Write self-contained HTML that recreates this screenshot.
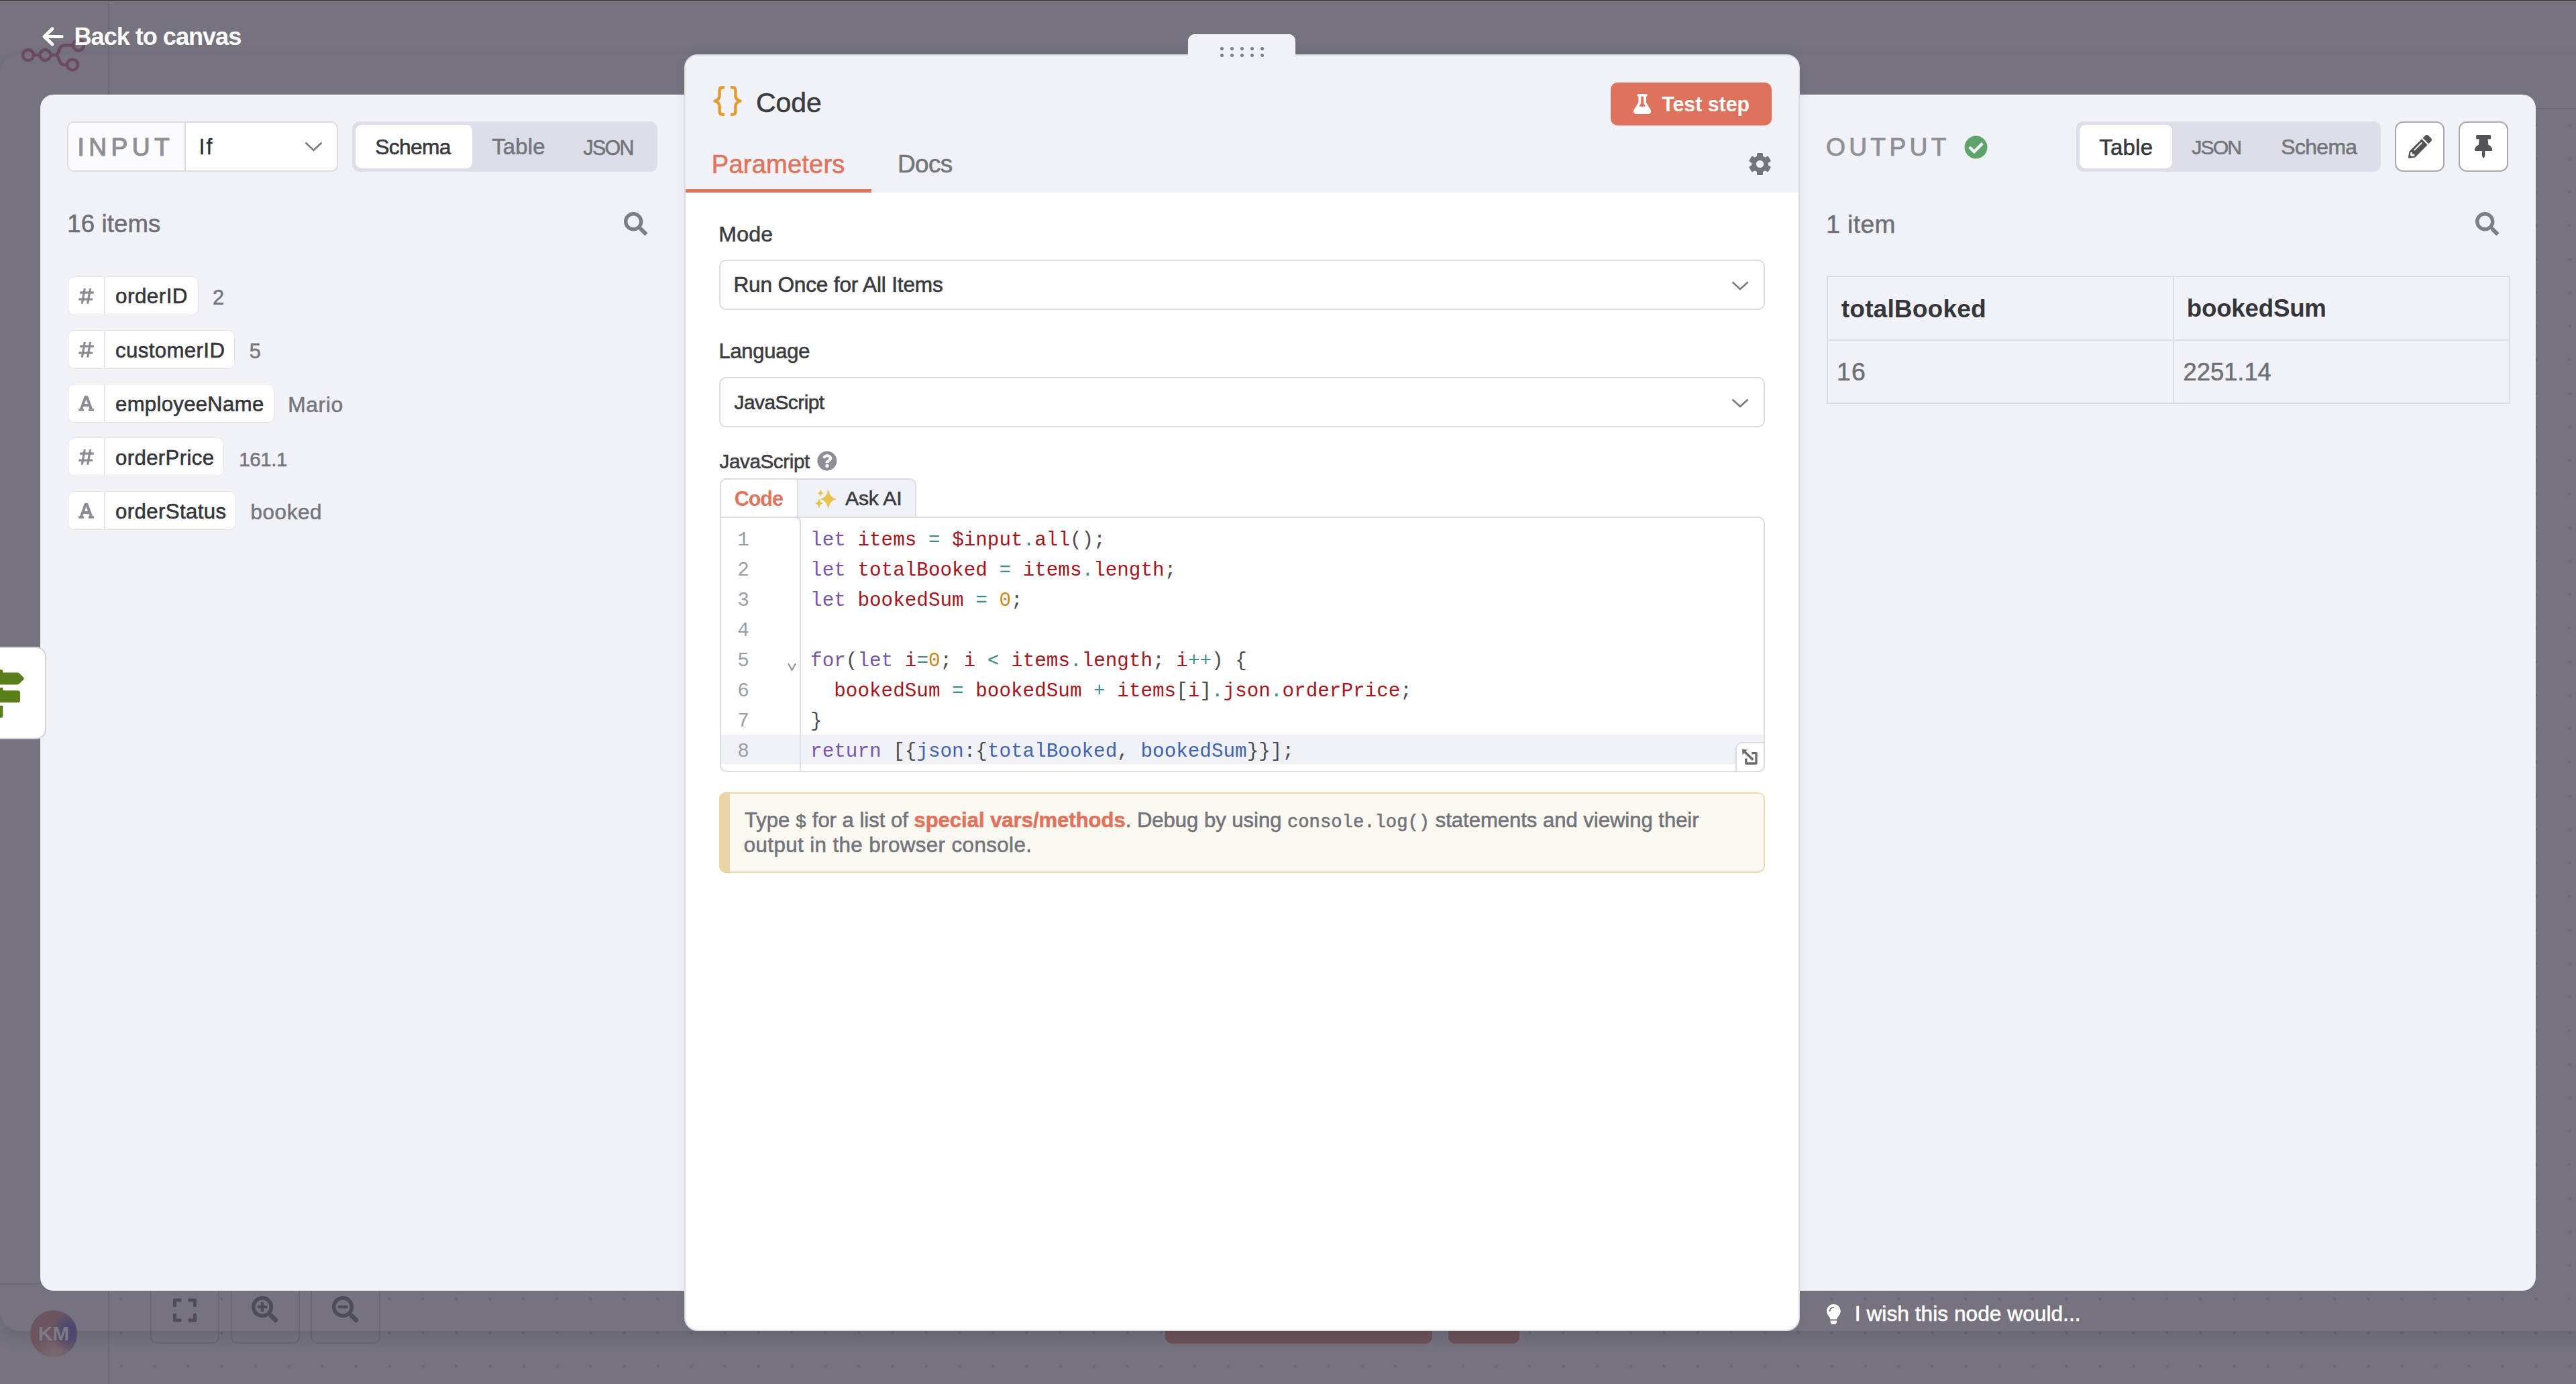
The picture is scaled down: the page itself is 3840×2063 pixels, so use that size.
<!DOCTYPE html><html><head><meta charset="utf-8"><style>html,body{margin:0;padding:0;width:3840px;height:2063px;overflow:hidden;background:#76737f}body{position:relative;font-family:"Liberation Sans",sans-serif}</style></head><body><div style="position:absolute;left:0;top:0;width:3840px;height:2063px;background:#76737f"></div>
<div style="position:absolute;left:162px;top:162px;width:3678px;height:1901px;background-image:radial-gradient(circle at 25px 25px, #6a6773 0, #6a6773 2px, rgba(0,0,0,0) 2.6px);background-size:50px 50px;background-position:43.5px 49.5px"></div>
<div style="position:absolute;left:161px;top:0px;width:2px;height:2063px;box-sizing:border-box;background:#6c6975"></div>
<div style="position:absolute;left:162px;top:161px;width:3678px;height:2px;box-sizing:border-box;background:#6e6b77"></div>
<div style="position:absolute;left:0px;top:0px;width:3840px;height:1px;box-sizing:border-box;background:#353432"></div>
<div style="position:absolute;left:0px;top:1px;width:3840px;height:1px;box-sizing:border-box;background:#7b7886"></div>
<svg style="position:absolute;left:20px;top:50px;overflow:visible" width="110" height="60" viewBox="0 0 110 60"><g fill="none" stroke="#6b4a62" stroke-width="4.5">
<circle cx="22" cy="32" r="8"/><circle cx="47.5" cy="32" r="8"/><circle cx="97" cy="17.5" r="8"/><circle cx="88" cy="46.5" r="8"/>
<path d="M30 32 H39.5 M55.5 32 H62 C70 32 66 17.5 76 17.5 H89 M62 32 C70 32 66 46.5 76 46.5 H80"/></g></svg>
<div style="position:absolute;left:224px;top:1890px;width:103px;height:113px;box-sizing:border-box;background:#76737f;border:2px solid #6a6772;border-radius:10px"></div>
<div style="position:absolute;left:344px;top:1890px;width:103px;height:113px;box-sizing:border-box;background:#76737f;border:2px solid #6a6772;border-radius:10px"></div>
<div style="position:absolute;left:463px;top:1890px;width:104px;height:113px;box-sizing:border-box;background:#76737f;border:2px solid #6a6772;border-radius:10px"></div>
<svg style="position:absolute;left:257.6px;top:1932.5px;overflow:visible" width="35" height="40" viewBox="0 0 448 512"><path fill="#4e4c56" d="M0 180V56c0-13.3 10.7-24 24-24h124c6.6 0 12 5.4 12 12v40c0 6.6-5.4 12-12 12H64v84c0 6.6-5.4 12-12 12H12c-6.6 0-12-5.4-12-12zM288 44v40c0 6.6 5.4 12 12 12h84v84c0 6.6 5.4 12 12 12h40c6.6 0 12-5.4 12-12V56c0-13.3-10.7-24-24-24H300c-6.6 0-12 5.4-12 12zm148 276h-40c-6.6 0-12 5.4-12 12v84h-84c-6.6 0-12 5.4-12 12v40c0 6.6 5.4 12 12 12h124c13.3 0 24-10.7 24-24V332c0-6.6-5.4-12-12-12zM160 468v-40c0-6.6-5.4-12-12-12H64v-84c0-6.6-5.4-12-12-12H12c-6.6 0-12 5.4-12 12v124c0 13.3 10.7 24 24 24h124c6.6 0 12-5.4 12-12z"/></svg>
<svg style="position:absolute;left:375px;top:1931.8px;overflow:visible" width="39.6" height="39.6" viewBox="0 0 512 512"><path fill="#4e4c56" d="M304 192v32c0 6.6-5.4 12-12 12h-56v56c0 6.6-5.4 12-12 12h-32c-6.6 0-12-5.4-12-12v-56h-56c-6.6 0-12-5.4-12-12v-32c0-6.6 5.4-12 12-12h56v-56c0-6.6 5.4-12 12-12h32c6.6 0 12 5.4 12 12v56h56c6.6 0 12 5.4 12 12zm201 284.7L476.7 505c-9.4 9.4-24.6 9.4-33.9 0L343 405.3c-4.5-4.5-7-10.6-7-17V372c-35.3 27.6-79.7 44-128 44C93.1 416 0 322.9 0 208S93.1 0 208 0s208 93.1 208 208c0 48.3-16.4 92.7-44 128h16.3c6.4 0 12.5 2.5 17 7l99.7 99.7c9.3 9.4 9.3 24.6 0 34zM344 208c0-75.2-60.8-136-136-136S72 132.8 72 208s60.8 136 136 136 136-60.8 136-136z"/></svg>
<svg style="position:absolute;left:495px;top:1931.8px;overflow:visible" width="39.6" height="39.6" viewBox="0 0 512 512"><path fill="#4e4c56" d="M304 192v32c0 6.6-5.4 12-12 12H124c-6.6 0-12-5.4-12-12v-32c0-6.6 5.4-12 12-12h168c6.6 0 12 5.4 12 12zm201 284.7L476.7 505c-9.4 9.4-24.6 9.4-33.9 0L343 405.3c-4.5-4.5-7-10.6-7-17V372c-35.3 27.6-79.7 44-128 44C93.1 416 0 322.9 0 208S93.1 0 208 0s208 93.1 208 208c0 48.3-16.4 92.7-44 128h16.3c6.4 0 12.5 2.5 17 7l99.7 99.7c9.3 9.4 9.3 24.6 0 34zM344 208c0-75.2-60.8-136-136-136S72 132.8 72 208s60.8 136 136 136 136-60.8 136-136z"/></svg>
<div style="position:absolute;left:1737px;top:1960px;width:398px;height:43px;box-sizing:border-box;background:#6f5258;border-radius:10px"></div>
<div style="position:absolute;left:2159px;top:1960px;width:106px;height:43px;box-sizing:border-box;background:#6f5258;border-radius:10px"></div>
<svg style="position:absolute;left:62px;top:40px;overflow:visible" width="31" height="29" viewBox="0 0 31 29"><path d="M16 3 L4 14.5 L16 26 M4.5 14.5 H30" fill="none" stroke="#fff" stroke-width="5" stroke-linecap="round" stroke-linejoin="round"/></svg>
<div style="position:absolute;left:110.56px;top:37.37px;font-family:'Liberation Sans', sans-serif;font-size:36.19px;line-height:36.19px;letter-spacing:-1.05px;color:#fff;font-weight:bold;white-space:pre;">Back to canvas</div>
<div style="position:absolute;left:0px;top:81px;width:3880px;height:1903px;border-radius:30px;box-shadow:0 10px 24px rgba(40,38,50,0.16)"></div>
<div style="position:absolute;left:0px;top:1913px;width:60px;height:2px;box-sizing:border-box;background:#6d6a76"></div>
<div style="position:absolute;left:45px;top:1953px;width:70px;height:70px;border-radius:50%;background:radial-gradient(circle at 85% 45%, #4d4870 0, rgba(77,72,112,0.9) 12px, rgba(77,72,112,0) 30px), radial-gradient(circle at 50% 100%, #7a6c74 0, rgba(122,108,116,0) 35px), #6c5560"></div>
<div style="position:absolute;left:56.73px;top:1973.41px;font-family:'Liberation Sans', sans-serif;font-size:29.94px;line-height:29.94px;letter-spacing:-0.09px;color:#7f7b87;font-weight:bold;white-space:pre;">KM</div>
<div style="position:absolute;left:60px;top:141px;width:1040px;height:1783px;box-sizing:border-box;background:#f1f2f7;border-radius:20px"></div>
<div style="position:absolute;left:100px;top:181px;width:404px;height:75px;box-sizing:border-box;background:#fff;border:2px solid #d9dbe5;border-radius:10px"></div>
<div style="position:absolute;left:102px;top:183px;width:174px;height:71px;box-sizing:border-box;background:#fbfbfd;border-radius:8px 0 0 8px"></div>
<div style="position:absolute;left:275px;top:183px;width:2px;height:71px;box-sizing:border-box;background:#d9dbe5"></div>
<div style="position:absolute;left:115.56px;top:200.81px;font-family:'Liberation Sans', sans-serif;font-size:37.20px;line-height:37.20px;letter-spacing:6.42px;color:#8f9096;font-weight:normal;white-space:pre;-webkit-text-stroke-width:1.2px;">INPUT</div>
<div style="position:absolute;left:296.41px;top:202.74px;font-family:'Liberation Sans', sans-serif;font-size:32.32px;line-height:32.32px;letter-spacing:2.17px;color:#2e2f34;font-weight:normal;white-space:pre;-webkit-text-stroke-width:0.3px;">If</div>
<svg style="position:absolute;left:454px;top:211px;overflow:visible" width="27" height="15" viewBox="0 0 27 15"><path d="M1.5 1.5 L13.5 13 L25.5 1.5" fill="none" stroke="#7a7b81" stroke-width="2.6"/></svg>
<div style="position:absolute;left:525px;top:181px;width:455px;height:75px;box-sizing:border-box;background:#dcdee8;border-radius:11px"></div>
<div style="position:absolute;left:530px;top:186px;width:174px;height:65px;box-sizing:border-box;background:#fff;border-radius:9px"></div>
<div style="position:absolute;left:559.17px;top:203.76px;font-family:'Liberation Sans', sans-serif;font-size:31.71px;line-height:31.71px;letter-spacing:-0.63px;color:#38393e;font-weight:normal;white-space:pre;-webkit-text-stroke-width:0.6px;">Schema</div>
<div style="position:absolute;left:733.26px;top:202.79px;font-family:'Liberation Sans', sans-serif;font-size:32.86px;line-height:32.86px;letter-spacing:0.15px;color:#74757b;font-weight:normal;white-space:pre;-webkit-text-stroke-width:0.6px;">Table</div>
<div style="position:absolute;left:869.54px;top:204.84px;font-family:'Liberation Sans', sans-serif;font-size:30.43px;line-height:30.43px;letter-spacing:-1.74px;color:#74757b;font-weight:normal;white-space:pre;-webkit-text-stroke-width:0.6px;">JSON</div>
<div style="position:absolute;left:100.26px;top:316.07px;font-family:'Liberation Sans', sans-serif;font-size:36.54px;line-height:36.54px;letter-spacing:0.13px;color:#6f7077;font-weight:normal;white-space:pre;-webkit-text-stroke-width:0.6px;">16 items</div>
<svg style="position:absolute;left:930px;top:316px;overflow:visible" width="35" height="35" viewBox="0 0 512 512"><path fill="#7e7f86" d="M505 442.7L405.3 343c-4.5-4.5-10.6-7-17-7H372c27.6-35.3 44-79.7 44-128C416 93.1 322.9 0 208 0S0 93.1 0 208s93.1 208 208 208c48.3 0 92.7-16.4 128-44v16.3c0 6.4 2.5 12.5 7 17l99.7 99.7c9.4 9.4 24.6 9.4 33.9 0l28.3-28.3c9.4-9.4 9.4-24.6.1-34zM208 336c-70.7 0-128-57.2-128-128 0-70.7 57.2-128 128-128 70.7 0 128 57.2 128 128 0 70.7-57.2 128-128 128z"/></svg>
<div style="position:absolute;left:101px;top:412px;width:195px;height:58px;box-sizing:border-box;background:#fff;border:1.5px solid #e4e5ec;border-radius:10px"></div>
<div style="position:absolute;left:154.5px;top:413px;width:2.0px;height:56px;box-sizing:border-box;background:#e4e5ec"></div>
<svg style="position:absolute;left:117px;top:428.4px;overflow:visible" width="23" height="26.3" viewBox="0 0 448 512"><path fill="#8d8e95" d="M440.667 182.109l7.143-40c1.313-7.355-4.342-14.109-11.813-14.109h-74.81l14.623-81.891C377.123 38.754 371.468 32 363.997 32h-40.632a12 12 0 0 0-11.813 9.891L296.175 128H197.54l14.623-81.891C213.477 38.754 207.822 32 200.35 32h-40.632a12 12 0 0 0-11.813 9.891L132.528 128H53.432a12 12 0 0 0-11.813 9.891l-7.143 40C33.163 185.246 38.818 192 46.289 192h74.81L98.242 320H19.146a12 12 0 0 0-11.813 9.891l-7.143 40C-1.123 377.246 4.532 384 12.003 384h74.81L72.19 465.891C70.877 473.246 76.532 480 84.003 480h40.632a12 12 0 0 0 11.813-9.891L151.826 384h98.634l-14.623 81.891C234.523 473.246 240.178 480 247.65 480h40.632a12 12 0 0 0 11.813-9.891L315.472 384h79.096a12 12 0 0 0 11.813-9.891l7.143-40c1.313-7.355-4.342-14.109-11.813-14.109h-74.81l22.857-128h79.096a12 12 0 0 0 11.813-9.891zM261.889 320h-98.634l22.857-128h98.634l-22.857 128z"/></svg>
<div style="position:absolute;left:172.07px;top:426.46px;font-family:'Liberation Sans', sans-serif;font-size:31.36px;line-height:31.36px;letter-spacing:0.48px;color:#35363b;font-weight:normal;white-space:pre;-webkit-text-stroke-width:0.6px;">orderID</div>
<div style="position:absolute;left:317.06px;top:428.98px;font-family:'Liberation Sans', sans-serif;font-size:30.74px;line-height:30.74px;letter-spacing:0.00px;color:#76777e;font-weight:normal;white-space:pre;-webkit-text-stroke-width:0.6px;">2</div>
<div style="position:absolute;left:101px;top:492px;width:249.39999999999998px;height:58px;box-sizing:border-box;background:#fff;border:1.5px solid #e4e5ec;border-radius:10px"></div>
<div style="position:absolute;left:154.5px;top:493px;width:2.0px;height:56px;box-sizing:border-box;background:#e4e5ec"></div>
<svg style="position:absolute;left:117px;top:508.4px;overflow:visible" width="23" height="26.3" viewBox="0 0 448 512"><path fill="#8d8e95" d="M440.667 182.109l7.143-40c1.313-7.355-4.342-14.109-11.813-14.109h-74.81l14.623-81.891C377.123 38.754 371.468 32 363.997 32h-40.632a12 12 0 0 0-11.813 9.891L296.175 128H197.54l14.623-81.891C213.477 38.754 207.822 32 200.35 32h-40.632a12 12 0 0 0-11.813 9.891L132.528 128H53.432a12 12 0 0 0-11.813 9.891l-7.143 40C33.163 185.246 38.818 192 46.289 192h74.81L98.242 320H19.146a12 12 0 0 0-11.813 9.891l-7.143 40C-1.123 377.246 4.532 384 12.003 384h74.81L72.19 465.891C70.877 473.246 76.532 480 84.003 480h40.632a12 12 0 0 0 11.813-9.891L151.826 384h98.634l-14.623 81.891C234.523 473.246 240.178 480 247.65 480h40.632a12 12 0 0 0 11.813-9.891L315.472 384h79.096a12 12 0 0 0 11.813-9.891l7.143-40c1.313-7.355-4.342-14.109-11.813-14.109h-74.81l22.857-128h79.096a12 12 0 0 0 11.813-9.891zM261.889 320h-98.634l22.857-128h98.634l-22.857 128z"/></svg>
<div style="position:absolute;left:172.07px;top:506.61px;font-family:'Liberation Sans', sans-serif;font-size:31.18px;line-height:31.18px;letter-spacing:0.39px;color:#35363b;font-weight:normal;white-space:pre;-webkit-text-stroke-width:0.6px;">customerID</div>
<div style="position:absolute;left:371.77px;top:508.90px;font-family:'Liberation Sans', sans-serif;font-size:30.83px;line-height:30.83px;letter-spacing:0.00px;color:#76777e;font-weight:normal;white-space:pre;-webkit-text-stroke-width:0.6px;">5</div>
<div style="position:absolute;left:101px;top:572px;width:307.5px;height:58px;box-sizing:border-box;background:#fff;border:1.5px solid #e4e5ec;border-radius:10px"></div>
<div style="position:absolute;left:154.5px;top:573px;width:2.0px;height:56px;box-sizing:border-box;background:#e4e5ec"></div>
<svg style="position:absolute;left:117px;top:588.4px;overflow:visible" width="23" height="26.3" viewBox="0 0 448 512"><path fill="#8d8e95" d="M432 416h-23.41L277.88 53.69A32 32 0 0 0 247.58 32h-47.16a32 32 0 0 0-30.3 21.69L39.41 416H16a16 16 0 0 0-16 16v32a16 16 0 0 0 16 16h128a16 16 0 0 0 16-16v-32a16 16 0 0 0-16-16h-19.58l23.3-64h152.56l23.3 64H304a16 16 0 0 0-16 16v32a16 16 0 0 0 16 16h128a16 16 0 0 0 16-16v-32a16 16 0 0 0-16-16zM176.85 272L224 142.51 271.150 272z"/></svg>
<div style="position:absolute;left:172.08px;top:586.73px;font-family:'Liberation Sans', sans-serif;font-size:31.04px;line-height:31.04px;letter-spacing:0.34px;color:#35363b;font-weight:normal;white-space:pre;-webkit-text-stroke-width:0.6px;">employeeName</div>
<div style="position:absolute;left:429.19px;top:588.19px;font-family:'Liberation Sans', sans-serif;font-size:31.67px;line-height:31.67px;letter-spacing:0.72px;color:#76777e;font-weight:normal;white-space:pre;-webkit-text-stroke-width:0.6px;">Mario</div>
<div style="position:absolute;left:101px;top:652px;width:233px;height:58px;box-sizing:border-box;background:#fff;border:1.5px solid #e4e5ec;border-radius:10px"></div>
<div style="position:absolute;left:154.5px;top:653px;width:2.0px;height:56px;box-sizing:border-box;background:#e4e5ec"></div>
<svg style="position:absolute;left:117px;top:668.4px;overflow:visible" width="23" height="26.3" viewBox="0 0 448 512"><path fill="#8d8e95" d="M440.667 182.109l7.143-40c1.313-7.355-4.342-14.109-11.813-14.109h-74.81l14.623-81.891C377.123 38.754 371.468 32 363.997 32h-40.632a12 12 0 0 0-11.813 9.891L296.175 128H197.54l14.623-81.891C213.477 38.754 207.822 32 200.35 32h-40.632a12 12 0 0 0-11.813 9.891L132.528 128H53.432a12 12 0 0 0-11.813 9.891l-7.143 40C33.163 185.246 38.818 192 46.289 192h74.81L98.242 320H19.146a12 12 0 0 0-11.813 9.891l-7.143 40C-1.123 377.246 4.532 384 12.003 384h74.81L72.19 465.891C70.877 473.246 76.532 480 84.003 480h40.632a12 12 0 0 0 11.813-9.891L151.826 384h98.634l-14.623 81.891C234.523 473.246 240.178 480 247.65 480h40.632a12 12 0 0 0 11.813-9.891L315.472 384h79.096a12 12 0 0 0 11.813-9.891l7.143-40c1.313-7.355-4.342-14.109-11.813-14.109h-74.81l22.857-128h79.096a12 12 0 0 0 11.813-9.891zM261.889 320h-98.634l22.857-128h98.634l-22.857 128z"/></svg>
<div style="position:absolute;left:172.07px;top:666.61px;font-family:'Liberation Sans', sans-serif;font-size:31.18px;line-height:31.18px;letter-spacing:0.35px;color:#35363b;font-weight:normal;white-space:pre;-webkit-text-stroke-width:0.6px;">orderPrice</div>
<div style="position:absolute;left:356.18px;top:669.90px;font-family:'Liberation Sans', sans-serif;font-size:29.65px;line-height:29.65px;letter-spacing:-0.49px;color:#76777e;font-weight:normal;white-space:pre;-webkit-text-stroke-width:0.6px;">161.1</div>
<div style="position:absolute;left:101px;top:732px;width:251px;height:58px;box-sizing:border-box;background:#fff;border:1.5px solid #e4e5ec;border-radius:10px"></div>
<div style="position:absolute;left:154.5px;top:733px;width:2.0px;height:56px;box-sizing:border-box;background:#e4e5ec"></div>
<svg style="position:absolute;left:117px;top:748.4px;overflow:visible" width="23" height="26.3" viewBox="0 0 448 512"><path fill="#8d8e95" d="M432 416h-23.41L277.88 53.69A32 32 0 0 0 247.58 32h-47.16a32 32 0 0 0-30.3 21.69L39.41 416H16a16 16 0 0 0-16 16v32a16 16 0 0 0 16 16h128a16 16 0 0 0 16-16v-32a16 16 0 0 0-16-16h-19.58l23.3-64h152.56l23.3 64H304a16 16 0 0 0-16 16v32a16 16 0 0 0 16 16h128a16 16 0 0 0 16-16v-32a16 16 0 0 0-16-16zM176.85 272L224 142.51 271.150 272z"/></svg>
<div style="position:absolute;left:172.07px;top:746.58px;font-family:'Liberation Sans', sans-serif;font-size:31.21px;line-height:31.21px;letter-spacing:0.37px;color:#35363b;font-weight:normal;white-space:pre;-webkit-text-stroke-width:0.6px;">orderStatus</div>
<div style="position:absolute;left:373.56px;top:748.42px;font-family:'Liberation Sans', sans-serif;font-size:31.40px;line-height:31.40px;letter-spacing:0.58px;color:#76777e;font-weight:normal;white-space:pre;-webkit-text-stroke-width:0.6px;">booked</div>
<div style="position:absolute;left:2600px;top:141px;width:1180px;height:1783px;box-sizing:border-box;background:#f1f2f7;border-radius:20px"></div>
<div style="position:absolute;left:2721.93px;top:201.21px;font-family:'Liberation Sans', sans-serif;font-size:37.20px;line-height:37.20px;letter-spacing:5.32px;color:#8f9096;font-weight:normal;white-space:pre;-webkit-text-stroke-width:0.9px;">OUTPUT</div>
<svg style="position:absolute;left:2928.1px;top:201.5px;overflow:visible" width="35.1" height="35.1" viewBox="0 0 512 512"><path fill="#5ea46a" d="M504 256c0 136.967-111.033 248-248 248S8 392.967 8 256 119.033 8 256 8s248 111.033 248 248zM227.314 387.314l184-184c6.248-6.248 6.248-16.379 0-22.627l-22.627-22.627c-6.248-6.249-16.379-6.249-22.628 0L216 308.118l-70.059-70.059c-6.248-6.248-16.379-6.248-22.628 0l-22.627 22.627c-6.248 6.248-6.248 16.379 0 22.627l104 104c6.249 6.249 16.379 6.249 22.628.001z"/></svg>
<div style="position:absolute;left:3095px;top:181px;width:454px;height:75px;box-sizing:border-box;background:#dcdee8;border-radius:11px"></div>
<div style="position:absolute;left:3100px;top:186px;width:138px;height:65px;box-sizing:border-box;background:#fff;border-radius:9px"></div>
<div style="position:absolute;left:3129.26px;top:202.64px;font-family:'Liberation Sans', sans-serif;font-size:33.03px;line-height:33.03px;letter-spacing:0.25px;color:#38393e;font-weight:normal;white-space:pre;-webkit-text-stroke-width:0.6px;">Table</div>
<div style="position:absolute;left:3267.25px;top:205.02px;font-family:'Liberation Sans', sans-serif;font-size:30.22px;line-height:30.22px;letter-spacing:-1.89px;color:#74757b;font-weight:normal;white-space:pre;-webkit-text-stroke-width:0.6px;">JSON</div>
<div style="position:absolute;left:3400.37px;top:203.71px;font-family:'Liberation Sans', sans-serif;font-size:31.77px;line-height:31.77px;letter-spacing:-0.59px;color:#74757b;font-weight:normal;white-space:pre;-webkit-text-stroke-width:0.6px;">Schema</div>
<div style="position:absolute;left:3570px;top:181px;width:74px;height:75px;box-sizing:border-box;background:#fff;border:2.5px solid #a5a8b2;border-radius:12px"></div>
<div style="position:absolute;left:3665px;top:181px;width:74px;height:75px;box-sizing:border-box;background:#fff;border:2.5px solid #a5a8b2;border-radius:12px"></div>
<svg style="position:absolute;left:3590px;top:201px;overflow:visible" width="35" height="35" viewBox="0 0 512 512"><path fill="#535458" d="M497.9 142.1l-46.1 46.1c-4.7 4.7-12.3 4.7-17 0l-111-111c-4.7-4.7-4.7-12.3 0-17l46.1-46.1c18.7-18.7 49.1-18.7 67.9 0l60.1 60.1c18.8 18.7 18.8 49.1 0 67.9zM284.2 99.8L21.6 362.4.4 483.9c-2.9 16.4 11.4 30.6 27.8 27.8l121.5-21.3 262.6-262.6c4.7-4.7 4.7-12.3 0-17l-111-111c-4.8-4.7-12.4-4.7-17.1 0zM124.1 339.9c-5.5-5.5-5.5-14.3 0-19.8l154-154c5.5-5.5 14.3-5.5 19.8 0s5.5 14.3 0 19.8l-154 154c-5.5 5.5-14.3 5.5-19.8 0zM88 424h48v36.3l-64.5 11.3-31.1-31.1L51.7 376H88v48z"/></svg>
<svg style="position:absolute;left:3689.4px;top:201px;overflow:visible" width="26.25" height="35" viewBox="0 0 384 512"><path fill="#535458" d="M298.028 214.267L285.793 96H328c13.255 0 24-10.745 24-24V24c0-13.255-10.745-24-24-24H56C42.745 0 32 10.745 32 24v48c0 13.255 10.745 24 24 24h42.207L85.972 214.267C37.465 236.82 0 277.261 0 328c0 13.255 10.745 24 24 24h136v104.007c0 1.242.289 2.467.845 3.578l24 48c2.941 5.882 11.364 5.893 14.311 0l24-48a8.008 8.008 0 0 0 .845-3.578V352h136c13.255 0 24-10.745 24-24-.001-51.183-37.983-91.42-85.973-113.733z"/></svg>
<div style="position:absolute;left:2722.22px;top:316.08px;font-family:'Liberation Sans', sans-serif;font-size:37.11px;line-height:37.11px;letter-spacing:0.43px;color:#6f7077;font-weight:normal;white-space:pre;-webkit-text-stroke-width:0.6px;">1 item</div>
<svg style="position:absolute;left:3690px;top:316px;overflow:visible" width="35" height="35" viewBox="0 0 512 512"><path fill="#7e7f86" d="M505 442.7L405.3 343c-4.5-4.5-10.6-7-17-7H372c27.6-35.3 44-79.7 44-128C416 93.1 322.9 0 208 0S0 93.1 0 208s93.1 208 208 208c48.3 0 92.7-16.4 128-44v16.3c0 6.4 2.5 12.5 7 17l99.7 99.7c9.4 9.4 24.6 9.4 33.9 0l28.3-28.3c9.4-9.4 9.4-24.6.1-34zM208 336c-70.7 0-128-57.2-128-128 0-70.7 57.2-128 128-128 70.7 0 128 57.2 128 128 0 70.7-57.2 128-128 128z"/></svg>
<div style="position:absolute;left:2723px;top:411px;width:1019px;height:191px;box-sizing:border-box;border:2px solid #dcdde5"></div>
<div style="position:absolute;left:2723px;top:506px;width:1019px;height:2px;box-sizing:border-box;background:#dcdde5"></div>
<div style="position:absolute;left:3239px;top:411px;width:2px;height:191px;box-sizing:border-box;background:#dcdde5"></div>
<div style="position:absolute;left:2744.84px;top:441.52px;font-family:'Liberation Sans', sans-serif;font-size:37.18px;line-height:37.18px;letter-spacing:0.11px;color:#35363b;font-weight:bold;white-space:pre;">totalBooked</div>
<div style="position:absolute;left:3259.81px;top:441.94px;font-family:'Liberation Sans', sans-serif;font-size:36.69px;line-height:36.69px;letter-spacing:-0.21px;color:#35363b;font-weight:bold;white-space:pre;">bookedSum</div>
<div style="position:absolute;left:2738.00px;top:536.06px;font-family:'Liberation Sans', sans-serif;font-size:37.38px;line-height:37.38px;letter-spacing:1.10px;color:#6f7077;font-weight:normal;white-space:pre;-webkit-text-stroke-width:0.6px;">16</div>
<div style="position:absolute;left:3254.59px;top:536.97px;font-family:'Liberation Sans', sans-serif;font-size:36.30px;line-height:36.30px;letter-spacing:-0.00px;color:#6f7077;font-weight:normal;white-space:pre;-webkit-text-stroke-width:0.6px;">2251.14</div>
<div style="position:absolute;left:1771px;top:51px;width:160px;height:49px;box-sizing:border-box;background:#f1f2f7;border-radius:10px 10px 0 0"></div>
<div style="position:absolute;left:1818.9px;top:69.9px;width:5.2px;height:5.2px;border-radius:50%;background:#7d7e84"></div>
<div style="position:absolute;left:1818.9px;top:79.9px;width:5.2px;height:5.2px;border-radius:50%;background:#7d7e84"></div>
<div style="position:absolute;left:1833.9px;top:69.9px;width:5.2px;height:5.2px;border-radius:50%;background:#7d7e84"></div>
<div style="position:absolute;left:1833.9px;top:79.9px;width:5.2px;height:5.2px;border-radius:50%;background:#7d7e84"></div>
<div style="position:absolute;left:1848.9px;top:69.9px;width:5.2px;height:5.2px;border-radius:50%;background:#7d7e84"></div>
<div style="position:absolute;left:1848.9px;top:79.9px;width:5.2px;height:5.2px;border-radius:50%;background:#7d7e84"></div>
<div style="position:absolute;left:1863.9px;top:69.9px;width:5.2px;height:5.2px;border-radius:50%;background:#7d7e84"></div>
<div style="position:absolute;left:1863.9px;top:79.9px;width:5.2px;height:5.2px;border-radius:50%;background:#7d7e84"></div>
<div style="position:absolute;left:1878.9px;top:69.9px;width:5.2px;height:5.2px;border-radius:50%;background:#7d7e84"></div>
<div style="position:absolute;left:1878.9px;top:79.9px;width:5.2px;height:5.2px;border-radius:50%;background:#7d7e84"></div>
<div style="position:absolute;left:1020px;top:81px;width:1663px;height:1903px;box-sizing:border-box;background:#fff;border:2.5px solid #d9dbe5;border-radius:20px;box-shadow:0 0 18px rgba(60,60,90,0.07)"></div>
<div style="position:absolute;left:1022.5px;top:83px;width:1658.0px;height:204px;box-sizing:border-box;background:#f1f2f7;border-radius:18px 18px 0 0"></div>
<div style="position:absolute;left:1771px;top:51px;width:160px;height:39px;box-sizing:border-box;background:#f1f2f7;border-radius:10px 10px 0 0"></div>
<div style="position:absolute;left:1818.9px;top:69.9px;width:5.2px;height:5.2px;border-radius:50%;background:#7d7e84"></div>
<div style="position:absolute;left:1818.9px;top:79.9px;width:5.2px;height:5.2px;border-radius:50%;background:#7d7e84"></div>
<div style="position:absolute;left:1833.9px;top:69.9px;width:5.2px;height:5.2px;border-radius:50%;background:#7d7e84"></div>
<div style="position:absolute;left:1833.9px;top:79.9px;width:5.2px;height:5.2px;border-radius:50%;background:#7d7e84"></div>
<div style="position:absolute;left:1848.9px;top:69.9px;width:5.2px;height:5.2px;border-radius:50%;background:#7d7e84"></div>
<div style="position:absolute;left:1848.9px;top:79.9px;width:5.2px;height:5.2px;border-radius:50%;background:#7d7e84"></div>
<div style="position:absolute;left:1863.9px;top:69.9px;width:5.2px;height:5.2px;border-radius:50%;background:#7d7e84"></div>
<div style="position:absolute;left:1863.9px;top:79.9px;width:5.2px;height:5.2px;border-radius:50%;background:#7d7e84"></div>
<div style="position:absolute;left:1878.9px;top:69.9px;width:5.2px;height:5.2px;border-radius:50%;background:#7d7e84"></div>
<div style="position:absolute;left:1878.9px;top:79.9px;width:5.2px;height:5.2px;border-radius:50%;background:#7d7e84"></div>
<svg style="position:absolute;left:1063px;top:128px;overflow:visible" width="43" height="45" viewBox="0 0 43 45"><path d="M17 2.2 H14 Q9.6 2.2 9.6 7 V14.5 Q9.6 20.5 2.4 22.5 Q9.6 24.5 9.6 30.5 V38 Q9.6 42.8 14 42.8 H17 M26 2.2 H29 Q33.4 2.2 33.4 7 V14.5 Q33.4 20.5 40.6 22.5 Q33.4 24.5 33.4 30.5 V38 Q33.4 42.8 29 42.8 H26" fill="none" stroke="#e59a2f" stroke-width="4.4" stroke-linejoin="round"/></svg>
<div style="position:absolute;left:1126.95px;top:132.93px;font-family:'Liberation Sans', sans-serif;font-size:40.96px;line-height:40.96px;letter-spacing:-0.03px;color:#3b3c41;font-weight:normal;white-space:pre;-webkit-text-stroke-width:0.6px;">Code</div>
<div style="position:absolute;left:2401px;top:123px;width:240px;height:64px;box-sizing:border-box;background:#df725c;border-radius:10px"></div>
<svg style="position:absolute;left:2435px;top:140px;overflow:visible" width="26.25" height="30" viewBox="0 0 448 512"><path fill="#fff" d="M437.2 403.5L320 215V64h8c13.3 0 24-10.7 24-24V24c0-13.3-10.7-24-24-24H120c-13.3 0-24 10.7-24 24v16c0 13.3 10.7 24 24 24h8v151L10.8 403.5C-18.5 450.6 15.3 512 70.9 512h306.2c55.7 0 89.4-61.5 60.1-108.5zM137.9 320l48.2-77.6c3.7-5.2 5.800-11.6 5.8-18.4V64h64v160c0 6.9 2.2 13.2 5.8 18.4l48.2 77.6h-172z"/></svg>
<div style="position:absolute;left:2477.20px;top:140.24px;font-family:'Liberation Sans', sans-serif;font-size:30.43px;line-height:30.43px;letter-spacing:-0.04px;color:#fff;font-weight:bold;white-space:pre;">Test step</div>
<div style="position:absolute;left:1060.86px;top:226.14px;font-family:'Liberation Sans', sans-serif;font-size:38.11px;line-height:38.11px;letter-spacing:0.17px;color:#e0735c;font-weight:normal;white-space:pre;-webkit-text-stroke-width:0.6px;">Parameters</div>
<div style="position:absolute;left:1022px;top:282px;width:277px;height:5px;box-sizing:border-box;background:#e0735c"></div>
<div style="position:absolute;left:1337.95px;top:227.13px;font-family:'Liberation Sans', sans-serif;font-size:36.95px;line-height:36.95px;letter-spacing:-0.60px;color:#74757b;font-weight:normal;white-space:pre;-webkit-text-stroke-width:0.6px;">Docs</div>
<svg style="position:absolute;left:2607px;top:228px;overflow:visible" width="33" height="33" viewBox="0 0 33 33"><g fill="#74757c" transform="translate(16.5 16.5)"><circle r="12.5"/><rect x="-4.5" y="-16.5" width="9" height="33" rx="1.5"/><rect x="-4.5" y="-16.5" width="9" height="33" rx="1.5" transform="rotate(60)"/><rect x="-4.5" y="-16.5" width="9" height="33" rx="1.5" transform="rotate(120)"/></g><circle cx="16.5" cy="16.5" r="5.6" fill="#f1f2f7"/></svg>
<div style="position:absolute;left:1071.35px;top:333.17px;font-family:'Liberation Sans', sans-serif;font-size:32.17px;line-height:32.17px;letter-spacing:0.13px;color:#3d3e43;font-weight:normal;white-space:pre;-webkit-text-stroke-width:0.6px;">Mode</div>
<div style="position:absolute;left:1072px;top:387px;width:1559px;height:75px;box-sizing:border-box;background:#fff;border:2px solid #d9dbe5;border-radius:10px"></div>
<div style="position:absolute;left:1093.39px;top:409.23px;font-family:'Liberation Sans', sans-serif;font-size:31.62px;line-height:31.62px;letter-spacing:-0.18px;color:#38393e;font-weight:normal;white-space:pre;-webkit-text-stroke-width:0.6px;">Run Once for All Items</div>
<svg style="position:absolute;left:2581px;top:418.5px;overflow:visible" width="26" height="14" viewBox="0 0 26 14"><path d="M1.5 1.5 L13 12 L24.5 1.5" fill="none" stroke="#7a7b81" stroke-width="2.6"/></svg>
<div style="position:absolute;left:1071.45px;top:509.33px;font-family:'Liberation Sans', sans-serif;font-size:30.92px;line-height:30.92px;letter-spacing:-0.23px;color:#3d3e43;font-weight:normal;white-space:pre;-webkit-text-stroke-width:0.6px;">Language</div>
<div style="position:absolute;left:1072px;top:562px;width:1559px;height:75px;box-sizing:border-box;background:#fff;border:2px solid #d9dbe5;border-radius:10px"></div>
<div style="position:absolute;left:1094.55px;top:584.69px;font-family:'Liberation Sans', sans-serif;font-size:29.90px;line-height:29.90px;letter-spacing:-0.55px;color:#38393e;font-weight:normal;white-space:pre;-webkit-text-stroke-width:0.6px;">JavaScript</div>
<svg style="position:absolute;left:2581px;top:593.5px;overflow:visible" width="26" height="14" viewBox="0 0 26 14"><path d="M1.5 1.5 L13 12 L24.5 1.5" fill="none" stroke="#7a7b81" stroke-width="2.6"/></svg>
<div style="position:absolute;left:1072.56px;top:672.89px;font-family:'Liberation Sans', sans-serif;font-size:29.66px;line-height:29.66px;letter-spacing:-0.42px;color:#3d3e43;font-weight:normal;white-space:pre;-webkit-text-stroke-width:0.6px;">JavaScript</div>
<svg style="position:absolute;left:1218.1px;top:672.1px;overflow:visible" width="29.9" height="29.9" viewBox="0 0 512 512"><circle cx="256" cy="256" r="200" fill="#fff"/><path fill="#8d8e96" d="M504 256c0 136.997-111.043 248-248 248S8 392.997 8 256C8 119.083 119.043 8 256 8s248 111.083 248 248zM262.655 90c-54.497 0-89.255 22.957-116.549 63.758-3.536 5.286-2.353 12.415 2.715 16.258l34.699 26.31c5.205 3.947 12.621 3.008 16.665-2.122 17.864-22.658 30.113-35.797 57.303-35.797 20.429 0 45.698 13.148 45.698 32.958 0 14.976-12.363 22.667-32.534 33.976C247.128 238.528 216 254.941 216 296v4c0 6.627 5.373 12 12 12h56c6.627 0 12-5.373 12-12v-1.333c0-28.462 83.186-29.647 83.186-106.667 0-58.002-60.165-102-116.531-102zM256 338c-25.365 0-46 20.635-46 46 0 25.364 20.635 46 46 46s46-20.636 46-46c0-25.365-20.635-46-46-46z"/></svg>
<div style="position:absolute;left:1073px;top:713px;width:293px;height:59px;box-sizing:border-box;background:#f1f2f7;border:2px solid #d9dbe5;border-radius:10px 10px 0 0"></div>
<div style="position:absolute;left:1075px;top:715px;width:114px;height:57px;box-sizing:border-box;background:#fff;border-radius:8px 0 0 0"></div>
<div style="position:absolute;left:1188px;top:715px;width:2px;height:57px;box-sizing:border-box;background:#d9dbe5"></div>
<div style="position:absolute;left:1094.78px;top:728.10px;font-family:'Liberation Sans', sans-serif;font-size:30.59px;line-height:30.59px;letter-spacing:-1.09px;color:#e0735c;font-weight:bold;white-space:pre;">Code</div>
<svg style="position:absolute;left:1210px;top:725px;overflow:visible" width="40" height="36" viewBox="0 0 40 36"><path fill="#e8c24a" stroke="#e8c24a" stroke-width="0.8" stroke-linejoin="round" d="M24.70 5.50 Q26.60 16.62 35.90 18.90 Q26.60 21.18 24.70 32.30 Q22.80 21.18 13.50 18.90 Q22.80 16.62 24.70 5.50 Z M13.20 5.40 Q13.85 9.22 17.00 10.00 Q13.85 10.78 13.20 14.60 Q12.55 10.78 9.40 10.00 Q12.55 9.22 13.20 5.40 Z M11.00 19.10 Q11.90 24.25 16.30 25.30 Q11.90 26.35 11.00 31.50 Q10.10 26.35 5.70 25.30 Q10.10 24.25 11.00 19.10 Z"/></svg>
<div style="position:absolute;left:1259.92px;top:728.43px;font-family:'Liberation Sans', sans-serif;font-size:30.21px;line-height:30.21px;letter-spacing:-0.16px;color:#3b3c41;font-weight:normal;white-space:pre;-webkit-text-stroke-width:0.6px;">Ask AI</div>
<div style="position:absolute;left:1073px;top:770px;width:1558px;height:381px;box-sizing:border-box;background:#fff;border:2px solid #d9dbe5;border-radius:0 10px 10px 10px"></div>
<div style="position:absolute;left:1075px;top:1095px;width:1554px;height:44px;box-sizing:border-box;background:#f0f1f6"></div>
<div style="position:absolute;left:1192px;top:772px;width:2px;height:377px;box-sizing:border-box;background:#dcdee8"></div>
<svg style="position:absolute;left:1180px;top:766px;overflow:visible" width="20" height="22" viewBox="0 0 20 22"><rect x="6" y="5.5" width="12" height="16" fill="#fff"/><rect x="10" y="4" width="10" height="2" fill="#d9dbe5"/><path d="M0 5 H5 Q13 5 13 13 V22" fill="none" stroke="#d9dbe5" stroke-width="2"/></svg>
<div style="position:absolute;left:1099.20px;top:790.54px;font-family:'Liberation Mono', monospace;font-size:29.3px;line-height:29.3px;color:#9a9ca5;font-weight:normal;white-space:pre;">1</div>
<div style="position:absolute;left:1099.20px;top:835.54px;font-family:'Liberation Mono', monospace;font-size:29.3px;line-height:29.3px;color:#9a9ca5;font-weight:normal;white-space:pre;">2</div>
<div style="position:absolute;left:1099.20px;top:880.54px;font-family:'Liberation Mono', monospace;font-size:29.3px;line-height:29.3px;color:#9a9ca5;font-weight:normal;white-space:pre;">3</div>
<div style="position:absolute;left:1099.20px;top:925.54px;font-family:'Liberation Mono', monospace;font-size:29.3px;line-height:29.3px;color:#9a9ca5;font-weight:normal;white-space:pre;">4</div>
<div style="position:absolute;left:1099.20px;top:970.54px;font-family:'Liberation Mono', monospace;font-size:29.3px;line-height:29.3px;color:#9a9ca5;font-weight:normal;white-space:pre;">5</div>
<div style="position:absolute;left:1099.20px;top:1015.54px;font-family:'Liberation Mono', monospace;font-size:29.3px;line-height:29.3px;color:#9a9ca5;font-weight:normal;white-space:pre;">6</div>
<div style="position:absolute;left:1099.20px;top:1060.54px;font-family:'Liberation Mono', monospace;font-size:29.3px;line-height:29.3px;color:#9a9ca5;font-weight:normal;white-space:pre;">7</div>
<div style="position:absolute;left:1099.20px;top:1105.54px;font-family:'Liberation Mono', monospace;font-size:29.3px;line-height:29.3px;color:#9a9ca5;font-weight:normal;white-space:pre;">8</div>
<svg style="position:absolute;left:1174px;top:988px;overflow:visible" width="13" height="12" viewBox="0 0 13 12"><path d="M1 1 L6.5 11 L12 1" fill="none" stroke="#8c8e96" stroke-width="2"/></svg>
<div style="position:absolute;left:1208.10px;top:790.54px;font-family:'Liberation Mono', monospace;font-size:29.3px;line-height:29.3px;color:#333;font-weight:normal;white-space:pre;"><span style="color:#7a56a8">let</span> <span style="color:#a3171d">items</span> <span style="color:#3f8c8c">=</span> <span style="color:#a3171d">$input</span><span style="color:#3f8c8c">.</span><span style="color:#a3171d">all</span><span style="color:#4a4b50">();</span></div>
<div style="position:absolute;left:1208.10px;top:835.54px;font-family:'Liberation Mono', monospace;font-size:29.3px;line-height:29.3px;color:#333;font-weight:normal;white-space:pre;"><span style="color:#7a56a8">let</span> <span style="color:#a3171d">totalBooked</span> <span style="color:#3f8c8c">=</span> <span style="color:#a3171d">items</span><span style="color:#3f8c8c">.</span><span style="color:#a3171d">length</span><span style="color:#4a4b50">;</span></div>
<div style="position:absolute;left:1208.10px;top:880.54px;font-family:'Liberation Mono', monospace;font-size:29.3px;line-height:29.3px;color:#333;font-weight:normal;white-space:pre;"><span style="color:#7a56a8">let</span> <span style="color:#a3171d">bookedSum</span> <span style="color:#3f8c8c">=</span> <span style="color:#c8861c">0</span><span style="color:#4a4b50">;</span></div>
<div style="position:absolute;left:1208.10px;top:925.54px;font-family:'Liberation Mono', monospace;font-size:29.3px;line-height:29.3px;color:#333;font-weight:normal;white-space:pre;"></div>
<div style="position:absolute;left:1208.10px;top:970.54px;font-family:'Liberation Mono', monospace;font-size:29.3px;line-height:29.3px;color:#333;font-weight:normal;white-space:pre;"><span style="color:#7a56a8">for</span><span style="color:#4a4b50">(</span><span style="color:#7a56a8">let</span> <span style="color:#a3171d">i</span><span style="color:#3f8c8c">=</span><span style="color:#c8861c">0</span><span style="color:#4a4b50">;</span> <span style="color:#a3171d">i</span> <span style="color:#3f8c8c">&lt;</span> <span style="color:#a3171d">items</span><span style="color:#3f8c8c">.</span><span style="color:#a3171d">length</span><span style="color:#4a4b50">;</span> <span style="color:#a3171d">i</span><span style="color:#3f8c8c">++</span><span style="color:#4a4b50">)</span> <span style="color:#4a4b50">{</span></div>
<div style="position:absolute;left:1208.10px;top:1015.54px;font-family:'Liberation Mono', monospace;font-size:29.3px;line-height:29.3px;color:#333;font-weight:normal;white-space:pre;">  <span style="color:#a3171d">bookedSum</span> <span style="color:#3f8c8c">=</span> <span style="color:#a3171d">bookedSum</span> <span style="color:#3f8c8c">+</span> <span style="color:#a3171d">items</span><span style="color:#4a4b50">[</span><span style="color:#a3171d">i</span><span style="color:#4a4b50">]</span><span style="color:#3f8c8c">.</span><span style="color:#a3171d">json</span><span style="color:#3f8c8c">.</span><span style="color:#a3171d">orderPrice</span><span style="color:#4a4b50">;</span></div>
<div style="position:absolute;left:1208.10px;top:1060.54px;font-family:'Liberation Mono', monospace;font-size:29.3px;line-height:29.3px;color:#333;font-weight:normal;white-space:pre;"><span style="color:#4a4b50">}</span></div>
<div style="position:absolute;left:1208.10px;top:1105.54px;font-family:'Liberation Mono', monospace;font-size:29.3px;line-height:29.3px;color:#333;font-weight:normal;white-space:pre;"><span style="color:#7a56a8">return</span> <span style="color:#4a4b50">[{</span><span style="color:#3f63b0">json</span><span style="color:#4a4b50">:</span><span style="color:#4a4b50">{</span><span style="color:#3f63b0">totalBooked</span><span style="color:#4a4b50">,</span> <span style="color:#3f63b0">bookedSum</span><span style="color:#4a4b50">}}];</span></div>
<div style="position:absolute;left:2587px;top:1106px;width:44px;height:45px;box-sizing:border-box;background:#fff;border:2px solid #d9dbe5;border-radius:10px 0 10px 0"></div>
<svg style="position:absolute;left:2597px;top:1117px;overflow:visible" width="23" height="23" viewBox="0 0 23 23"><path d="M0 0 L8 0.6 L0.6 8 Z" fill="#6b6c73"/><path d="M3 3 L16.3 15.6" stroke="#6b6c73" stroke-width="3.6"/><path d="M14.2 5.6 H21 V21 H5.8 V13.6" fill="none" stroke="#6b6c73" stroke-width="3.3" stroke-linejoin="round"/></svg>
<div style="position:absolute;left:1072px;top:1181px;width:1559px;height:120px;box-sizing:border-box;background:#fbf8f1;border:2px solid #ecd9ad;border-radius:10px"></div>
<div style="position:absolute;left:1072px;top:1181px;width:16px;height:120px;box-sizing:border-box;background:#ebd5a8;border-radius:10px 0 0 10px"></div>
<div style="position:absolute;left:1110.00px;top:1206.76px;font-family:'Liberation Sans', sans-serif;font-size:31px;line-height:31px;color:#72747b;font-weight:normal;white-space:pre;-webkit-text-stroke-width:0.6px">Type <span style="font-family:'Liberation Mono', monospace;font-size:27.2px">$</span> for a list of <b style="color:#e0735c">special vars/methods</b>. Debug by using <span style="font-family:'Liberation Mono', monospace;font-size:27.2px">console.log()</span> statements and viewing their</div>
<div style="position:absolute;left:1108.67px;top:1244.47px;font-family:'Liberation Sans', sans-serif;font-size:31.34px;line-height:31.34px;letter-spacing:0.39px;color:#72747b;font-weight:normal;white-space:pre;-webkit-text-stroke-width:0.6px;">output in the browser console.</div>
<div style="position:absolute;left:-40px;top:964px;width:109px;height:138px;box-sizing:border-box;background:#fff;border:2px solid #cfd0da;border-radius:15px"></div>
<svg style="position:absolute;left:-35.85px;top:997.6px;overflow:visible" width="71.7" height="71.7" viewBox="0 0 512 512"><path fill="#5a7f1a" d="M507.31 84.69L464 41.37c-6-6-14.14-9.37-22.63-9.37H288V16c0-8.84-7.16-16-16-16h-32c-8.84 0-16 7.16-16 16v16H56c-13.25 0-24 10.75-24 24v80c0 13.25 10.75 24 24 24h385.37c8.49 0 16.62-3.37 22.63-9.37l43.31-43.31c6.25-6.26 6.25-16.38 0-22.63zM224 496c0 8.84 7.16 16 16 16h32c8.84 0 16-7.16 16-16V384h-64v112zm224-272H288v-32h-64v32H70.63c-8.49 0-16.62 3.37-22.63 9.37L4.69 276.69c-6.25 6.25-6.25 16.38 0 22.63L48 342.63c6 6 14.14 9.37 22.63 9.37H448c13.25 0 24-10.75 24-24v-80c0-13.25-10.75-24-24-24z"/></svg>
<svg style="position:absolute;left:2722.9px;top:1943.9px;overflow:visible" width="20.7" height="30.1" viewBox="0 0 352 512"><path fill="#fff" d="M96.06 454.35c.01 6.29 1.87 12.45 5.36 17.69l17.09 25.69a31.99 31.99 0 0 0 26.64 14.28h61.71a31.99 31.99 0 0 0 26.64-14.28l17.09-25.690a31.989 31.989 0 0 0 5.36-17.69l.04-38.35H96.01l.05 38.35zM0 176c0 44.37 16.45 84.85 43.56 115.780 16.52 18.85 42.36 58.23 52.21 91.45.04.26.07.52.11.78h160.24c.04-.26.07-.51.11-.78 9.85-33.22 35.69-72.6 52.21-91.45C335.55 260.85 352 220.37 352 176 352 78.61 272.91-.3 175.45 0 73.44.31 0 82.97 0 176zm176-80c-44.11 0-80 35.89-80 80 0 8.840-7.16 16-16 16s-16-7.16-16-16c0-61.76 50.24-112 112-112 8.84 0 16 7.16 16 16s-7.16 16-16 16z"/></svg>
<div style="position:absolute;left:2764.78px;top:1943.24px;font-family:'Liberation Sans', sans-serif;font-size:31.61px;line-height:31.61px;letter-spacing:0.05px;color:#fff;font-weight:normal;white-space:pre;-webkit-text-stroke-width:0.6px;">I wish this node would...</div></body></html>
